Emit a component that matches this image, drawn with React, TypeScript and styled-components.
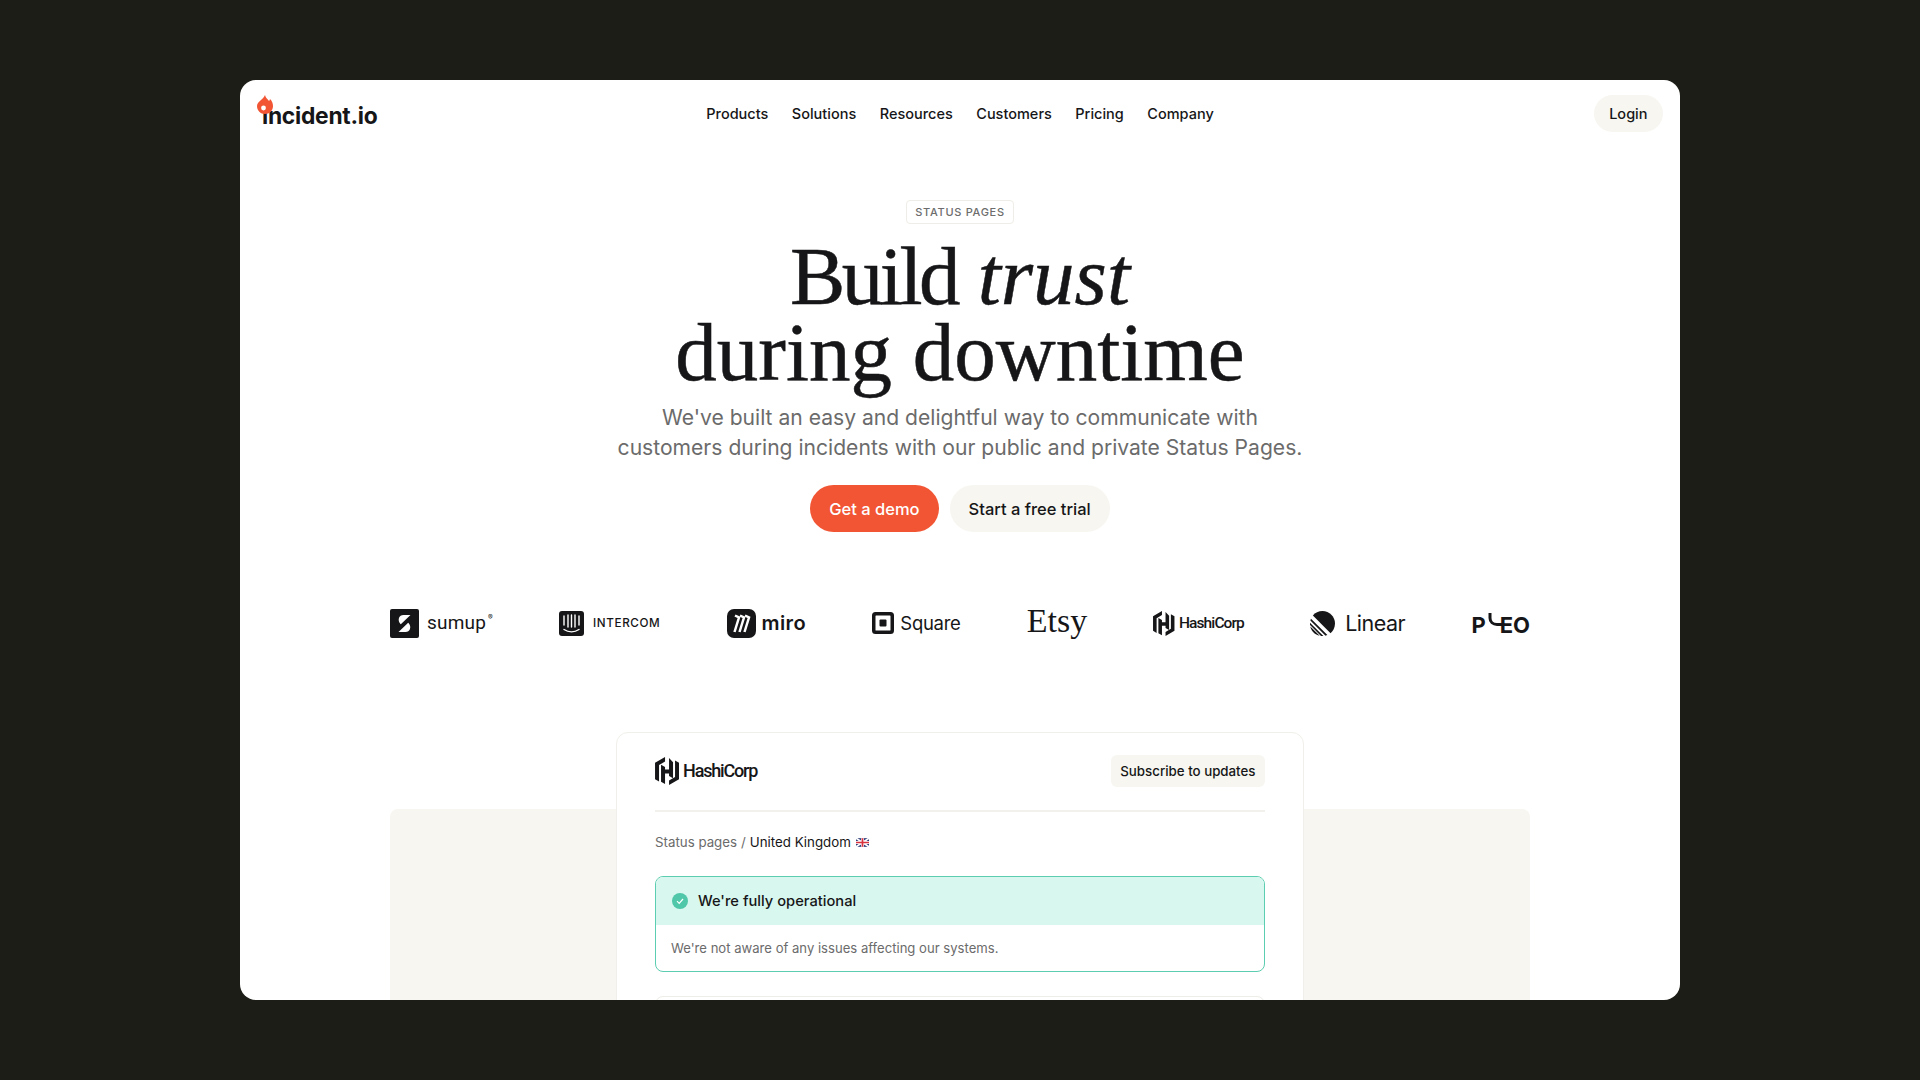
import React from 'react';
import styled, {createGlobalStyle} from 'styled-components';

const GlobalStyle = createGlobalStyle`
  html, body {
    margin: 0;
    height: 100%;
    overflow: hidden;
    background: #1c1d17;
  }
  * {
    box-sizing: border-box;
  }
`;

const Page = styled.div`
  width: 1920px;
  height: 1080px;
  padding: 80px 240px;
  background: #1c1d17;
  font-family: Inter, "Liberation Sans", sans-serif;
  color: #161618;
`;

const Frame = styled.div`
  height: 920px;
  overflow: hidden;
  background: #fff;
  border-radius: 16px;
`;

const TopBar = styled.header`
  display: grid;
  grid-template-columns: 1fr auto 1fr;
  align-items: center;
  padding: 15px 17px;
`;

const Brand = styled.a`
  position: relative;
  justify-self: start;
  display: block;
  height: 37px;
  padding-left: 5px;
  font-weight: 700;
  font-size: 22.8px;
  line-height: 41px;
  letter-spacing: -0.25px;
`;

const Flame = styled.svg`
  position: absolute;
  left: 0;
  top: 0;
  width: 16px;
  height: 19px;
`;

const Menu = styled.nav`
  display: flex;
  gap: 23.5px;
`;

const MenuItem = styled.a`
  font-size: 14.5px;
  font-weight: 500;
  line-height: 20px;
`;

const LoginPill = styled.a`
  justify-self: end;
  display: flex;
  align-items: center;
  height: 37px;
  padding: 0 15.5px;
  border-radius: 19px;
  background: #f7f6f1;
  font-size: 14.5px;
  font-weight: 500;
`;

const Hero = styled.section`
  display: flex;
  flex-direction: column;
  align-items: center;
  padding-top: 53px;
`;

const Eyebrow = styled.div`
  display: flex;
  align-items: center;
  height: 24px;
  padding: 0 8px;
  border: 1px solid #eeede7;
  border-radius: 4px;
  font-size: 11px;
  font-weight: 500;
  letter-spacing: 0.7px;
  text-transform: uppercase;
  color: #6d6d6d;
`;

const Headline = styled.h1`
  margin: 14px 0 0;
  font-family: "Liberation Serif", serif;
  font-weight: 400;
  font-size: 83px;
  line-height: 76px;
  text-align: center;
  color: #161618;
  -webkit-text-stroke: 0.5px #161618;
`;

const HeadWord = styled.span<{$spacing: number}>`
  letter-spacing: ${props => props.$spacing}px;
`;

const Lede = styled.p`
  margin: 13px 0 0;
  font-size: 21.1px;
  line-height: 30px;
  text-align: center;
  color: #6b6b6b;
`;

const Actions = styled.div`
  display: flex;
  gap: 11px;
  margin-top: 22px;
`;

const ActionButton = styled.a<{$primary?: boolean}>`
  display: flex;
  align-items: center;
  height: 47px;
  padding: 0 19px;
  border-radius: 24px;
  font-size: 16.5px;
  font-weight: 500;
  background: ${props => props.$primary ? '#f25533' : '#f7f6f1'};
  color: ${props => props.$primary ? '#fff' : '#161618'};
`;

const LogoRow = styled.div`
  display: flex;
  justify-content: space-between;
  align-items: center;
  height: 40px;
  margin: 71px 150px 0;
  color: #161618;
`;

const LogoItem = styled.div<{$gap: number; $nudge?: number}>`
  display: flex;
  align-items: center;
  gap: ${props => props.$gap}px;
  margin-top: ${props => props.$nudge || 0}px;
`;

const Wordmark = styled.span<{$size: number; $weight?: number; $spacing?: number; $serif?: boolean; $font?: string}>`
  font-family: ${props => props.$serif ? '"Liberation Serif", serif' : (props.$font || 'Inter, sans-serif')};
  font-size: ${props => props.$size}px;
  font-weight: ${props => props.$weight || 500};
  letter-spacing: ${props => props.$spacing || 0}px;
  line-height: 30px;
`;

const Registered = styled.sup`
  align-self: flex-start;
  margin: 5px 0 0 -6px;
  font-size: 7px;
  line-height: 10px;
`;

const PleoBend = styled.svg`
  margin: -4px -3px 0 -1px;
`;

const Showcase = styled.section`
  display: grid;
  margin: 89px 150px 0;
`;

const Backdrop = styled.div`
  grid-area: 1 / 1;
  margin-top: 77px;
  height: 400px;
  border-radius: 8px;
  background: #f7f6f1;
`;

const StatusCard = styled.div`
  grid-area: 1 / 1;
  z-index: 1;
  justify-self: center;
  width: 688px;
  height: 400px;
  padding: 23px 38px 0;
  background: #fff;
  border: 1px solid #f0efe9;
  border-radius: 12px;
`;

const CardHeader = styled.div`
  display: flex;
  justify-content: space-between;
  align-items: center;
  height: 56px;
  padding-bottom: 25px;
  border-bottom: 2px solid #f2f1ec;
`;

const SubscribeButton = styled.a`
  display: flex;
  align-items: center;
  height: 32px;
  padding: 0 9.5px;
  border-radius: 6px;
  background: #f7f6f1;
  font-size: 13.3px;
  font-weight: 500;
`;

const Breadcrumb = styled.div`
  display: flex;
  align-items: center;
  gap: 4px;
  margin-top: 20px;
  font-size: 13.3px;
  line-height: 20px;
  color: #6b6b6b;
`;

const Current = styled.span`
  color: #161618;
`;

const FlagIcon = styled.svg`
  width: 13px;
  height: 9px;
  margin-left: 1px;
`;

const AlertBox = styled.div`
  margin-top: 24px;
  overflow: hidden;
  border: 1px solid #5ccdb0;
  border-radius: 8px;
`;

const AlertHead = styled.div`
  display: flex;
  align-items: center;
  gap: 10px;
  height: 48px;
  padding: 0 16px;
  background: #d8f7ee;
  font-size: 14.7px;
  font-weight: 450;
`;

const AlertBody = styled.div`
  display: flex;
  align-items: center;
  height: 46px;
  padding: 0 15px;
  font-size: 13.1px;
  color: #6b6b6b;
`;

const NextBox = styled.div`
  height: 60px;
  margin-top: 24px;
  border: 1px solid #eeede7;
  border-radius: 8px;
`;

const HashiMark = ({size}: {size: number}) => (
  <svg width={size * 0.86} height={size} viewBox="0 0 24 28" fill="currentColor">
    <path d="M10 0 0 5.800v16.400l4 2.300V8.100l6-3.500z" />
    <path d="M14 0v11.500h-4V9L6 6.700v17.100l4 2.300V15.500h4V18l4 2.300V4.300z" transform="translate(0 1)" />
    <path d="M20 3.500v16.400l-6 3.500V28l10-5.800V5.800z" />
  </svg>
);

const App = () => {
  return (
    <Page>
      <GlobalStyle />
      <Frame>
        <TopBar>
          <Brand>
            <Flame viewBox="0 0 16 19">
              <path d="M8 0c.5 3 3 4.500 4 6 .5-.5.800-1 1-2 2 2 3 4.500 3 7 0 4.500-3.500 8-8 8s-8-3.500-8-8C0 6.500 6.500 4.500 8 0z" fill="#f25533" />
              <circle cx="6.500" cy="13" r="2.400" fill="#fff" />
            </Flame>
            incident.io
          </Brand>
          <Menu>
            {['Products', 'Solutions', 'Resources', 'Customers', 'Pricing', 'Company'].map(item => (
              <MenuItem key={item}>{item}</MenuItem>
            ))}
          </Menu>
          <LoginPill>Login</LoginPill>
        </TopBar>

        <Hero>
          <Eyebrow>Status pages</Eyebrow>
          <Headline>
            <HeadWord $spacing={-3.5}>Build</HeadWord> <em>trust</em><br />during downtime
          </Headline>
          <Lede>
            We've built an easy and delightful way to communicate with<br />
            customers during incidents with our public and private Status Pages.
          </Lede>
          <Actions>
            <ActionButton $primary>Get a demo</ActionButton>
            <ActionButton>Start a free trial</ActionButton>
          </Actions>
        </Hero>

        <LogoRow>
          <LogoItem $gap={8}>
            <svg width="29" height="29" viewBox="0 0 29 29">
              <rect width="29" height="29" rx="2" fill="#161618" />
              <path d="M20.500 6h-7c-4.500 0-6.500 5-3 9l.3.300zM8.500 23h7c4.500 0 6.500-5 3-9l-.3-.300z" fill="#fff" />
            </svg>
            <Wordmark $size={19} $weight={400} $spacing={0.2} $font="Roboto, sans-serif">sumup</Wordmark>
            <Registered>®</Registered>
          </LogoItem>
          <LogoItem $gap={9}>
            <svg width="25" height="25" viewBox="0 0 25 25">
              <rect width="25" height="25" rx="3" fill="#161618" />
              <path d="M5 5v9M9 4v12M12.500 4v12M16 4v12M20 5v9" stroke="#fff" strokeWidth="1.400" strokeLinecap="round" />
              <path d="M5 18.500c4.500 3 10.500 3 15 0" stroke="#fff" strokeWidth="1.400" strokeLinecap="round" fill="none" />
            </svg>
            <Wordmark $size={11.700} $spacing={0.6}>INTERCOM</Wordmark>
          </LogoItem>
          <LogoItem $gap={6}>
            <svg width="29" height="29" viewBox="0 0 29 29">
              <rect width="29" height="29" rx="7" fill="#161618" />
              <g fill="none" stroke="#fff" strokeWidth="2.500" strokeLinejoin="miter">
                <path d="M7.500 23 12 8.500 8 6.500" />
                <path d="M12.500 23 17 8.500 13 6.500" />
                <path d="M17.500 23 22 8.500 18 6.500" />
              </g>
            </svg>
            <Wordmark $size={20} $weight={600} $spacing={0.4}>miro</Wordmark>
          </LogoItem>
          <LogoItem $gap={6}>
            <svg width="22" height="22" viewBox="0 0 22 22">
              <path fillRule="evenodd" d="M3.500 0h15A3.500 3.500 0 0 1 22 3.500v15a3.500 3.500 0 0 1-3.500 3.500h-15A3.500 3.500 0 0 1 0 18.500v-15A3.500 3.500 0 0 1 3.500 0zM4 3.500a.5.500 0 0 0-.5.500v14a.5.500 0 0 0 .5.500h14a.5.500 0 0 0 .5-.500V4a.5.500 0 0 0-.5-.500z" fill="#161618" />
              <rect x="7.500" y="7.500" width="7" height="7" rx="1" fill="#161618" />
            </svg>
            <Wordmark $size={18.500} $weight={400} $spacing={-0.3}>Square</Wordmark>
          </LogoItem>
          <LogoItem $gap={0} $nudge={-4}>
            <Wordmark $size={34} $weight={400} $serif>Etsy</Wordmark>
          </LogoItem>
          <LogoItem $gap={4}>
            <HashiMark size={25} />
            <Wordmark $size={15.500} $spacing={-0.9} $font="Roboto, sans-serif">HashiCorp</Wordmark>
          </LogoItem>
          <LogoItem $gap={10}>
            <svg width="25" height="25" viewBox="0 0 100 100" fill="#161618">
              <path d="M1.200 61.500 38.500 98.800C19.800 95 5 80.200 1.200 61.500z" />
              <path d="M0 46.500 53.500 100c-3.200.2-6.400.1-9.500-.3L.3 56C-.1 52.900-.2 49.700 0 46.500z" />
              <path d="M3.900 30.500 69.500 96.100c-2.400 1-4.900 1.900-7.400 2.500L1.400 37.900c.6-2.500 1.500-5 2.500-7.400z" />
              <path d="M11.500 17.800C20.600 7 34.500 0 50 0c27.600 0 50 22.400 50 50 0 15.500-7 29.400-17.800 38.500z" />
            </svg>
            <Wordmark $size={21.500} $weight={400} $spacing={-0.5}>Linear</Wordmark>
          </LogoItem>
          <LogoItem $gap={0} $nudge={4}>
            <Wordmark $size={22} $weight={700}>P</Wordmark>
            <PleoBend width="18" height="20" viewBox="0 0 18 20" fill="none" stroke="#161618" strokeWidth="3">
              <path d="M5 0v5c0 4 3 6.500 7 6.500h6" />
            </PleoBend>
            <Wordmark $size={22} $weight={700}>EO</Wordmark>
          </LogoItem>
        </LogoRow>

        <Showcase>
          <Backdrop />
          <StatusCard>
            <CardHeader>
              <LogoItem $gap={4}>
                <HashiMark size={28} />
                <Wordmark $size={18} $spacing={-1.2} $font="Roboto, sans-serif">HashiCorp</Wordmark>
              </LogoItem>
              <SubscribeButton>Subscribe to updates</SubscribeButton>
            </CardHeader>
            <Breadcrumb>
              Status pages <span>/</span> <Current>United Kingdom</Current>
              <FlagIcon viewBox="0 0 60 40">
                <rect width="60" height="40" fill="#2b3a78" />
                <path d="M0 0l60 40M60 0L0 40" stroke="#fff" strokeWidth="8" />
                <path d="M30 0v40M0 20h60" stroke="#fff" strokeWidth="14" />
                <path d="M30 0v40M0 20h60" stroke="#d8333f" strokeWidth="8" />
              </FlagIcon>
            </Breadcrumb>
            <AlertBox>
              <AlertHead>
                <svg width="16" height="16" viewBox="0 0 16 16">
                  <circle cx="8" cy="8" r="8" fill="#4fc7a8" />
                  <path d="M5 8.200 7.200 10.400 11 6" stroke="#fff" strokeWidth="1.200" fill="none" />
                </svg>
                We're fully operational
              </AlertHead>
              <AlertBody>We're not aware of any issues affecting our systems.</AlertBody>
            </AlertBox>
            <NextBox />
          </StatusCard>
        </Showcase>
      </Frame>
    </Page>
  );
};

export default App;
